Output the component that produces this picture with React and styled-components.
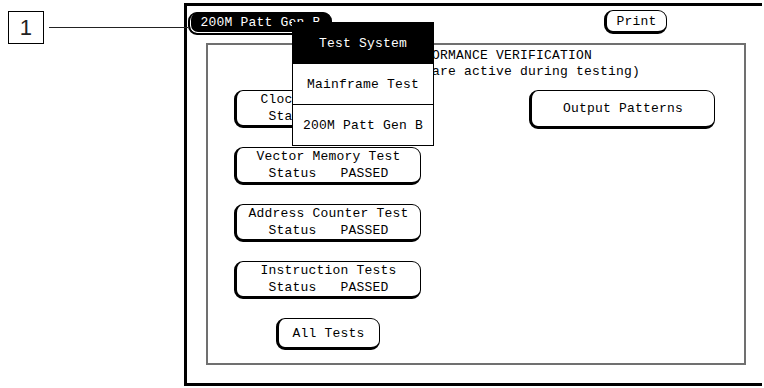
import React from "react";
import styled, { createGlobalStyle } from "styled-components";

const GlobalStyle = createGlobalStyle`
  html, body {
    margin: 0;
    padding: 0;
    background: #fff;
  }
  body {
    font-family: "Liberation Mono", "DejaVu Sans Mono", monospace;
    font-size: 13px;
    letter-spacing: 0.2px;
    color: #000;
  }
  * {
    box-sizing: border-box;
  }
`;

const Page = styled.div`
  display: flex;
  width: 764px;
  height: 388px;
  overflow: hidden;
`;

const Callout = styled.div`
  position: relative;
  z-index: 2;
  display: flex;
  align-items: center;
  align-self: flex-start;
  width: 188px;
  margin-right: -4px;
  padding: 11px 0 0 8px;
`;

const CalloutBox = styled.div`
  display: flex;
  align-items: center;
  justify-content: center;
  width: 36px;
  height: 33px;
  border: 1px solid #000;
  font-family: "Liberation Sans", Arial, sans-serif;
  font-size: 22px;
  color: #222;
`;

const CalloutLine = styled.div`
  flex: 1;
  height: 1px;
  margin-left: 5px;
  background: #222;
`;

const Frame = styled.div`
  position: relative;
  display: flex;
  flex-direction: column;
  width: 578px;
  height: 383px;
  margin-top: 3px;
  border: 3px solid #000;
  border-right: none;
`;

const TopBar = styled.div`
  display: flex;
  align-items: flex-start;
  justify-content: space-between;
  height: 37px;
  padding: 0 95px 0 1px;
`;

const Tab = styled.div`
  display: flex;
  align-items: center;
  justify-content: center;
  width: 144px;
  height: 23px;
  margin-top: 6px;
  padding-bottom: 2px;
  background: #000;
  color: #fff;
  border: 1px solid #000;
  border-left-width: 2px;
  border-bottom-width: 2px;
  border-radius: 9px;
  box-shadow: inset 1px -1px 0 #fff;
`;

const Button = styled.button`
  display: flex;
  flex-direction: column;
  align-items: center;
  justify-content: center;
  width: ${(p) => p.$w}px;
  height: ${(p) => p.$h}px;
  margin-top: ${(p) => p.$top || 0}px;
  align-self: ${(p) => p.$align || "auto"};
  padding: 0;
  background: #fff;
  color: #000;
  font: inherit;
  letter-spacing: inherit;
  line-height: 17px;
  white-space: pre;
  border: 1px solid #000;
  border-left-width: 3px;
  border-bottom-width: 3px;
  border-radius: 9px;
  cursor: pointer;
`;

const Panel = styled.div`
  display: flex;
  flex-direction: column;
  width: 540px;
  height: 322px;
  margin-left: 19px;
  border: 2px solid #707070;
`;

const Header = styled.div`
  height: 45px;
  padding: 3px 0 0 40px;
  text-align: center;
  line-height: 16px;
  white-space: pre;
`;

const Body = styled.div`
  display: flex;
  align-items: flex-start;
  gap: 108px;
  padding-left: 26px;
`;

const Column = styled.div`
  display: flex;
  flex-direction: column;
  gap: 19px;
  width: 187px;
`;

const Menu = styled.div`
  position: absolute;
  z-index: 3;
  left: 105px;
  top: 16px;
  display: flex;
  flex-direction: column;
  width: 142px;
  height: 124px;
  background: #fff;
  border: 1px solid #000;
`;

const MenuItem = styled.div`
  flex: 1;
  display: flex;
  align-items: center;
  justify-content: center;
  white-space: pre;
  background: ${(p) => (p.$active ? "#000" : "#fff")};
  color: ${(p) => (p.$active ? "#fff" : "#000")};
  & + & {
    border-top: 1px solid #000;
  }
`;

const tests = [
  "Clock Select Test",
  "Vector Memory Test",
  "Address Counter Test",
  "Instruction Tests",
];

const menuItems = ["Test System", "Mainframe Test", "200M Patt Gen B"];

export default function App() {
  return (
    <Page>
      <GlobalStyle />
      <Callout>
        <CalloutBox>1</CalloutBox>
        <CalloutLine />
      </Callout>
      <Frame>
        <TopBar>
          <Tab>200M Patt Gen B</Tab>
          <Button $w={63} $h={24} $top={4}>
            Print
          </Button>
        </TopBar>
        <Panel>
          <Header>
            <div>PERFORMANCE VERIFICATION</div>
            <div>(All pods are active during testing)</div>
          </Header>
          <Body>
            <Column>
              {tests.map((t) => (
                <Button key={t} $w={187} $h={38}>
                  <span>{t}</span>
                  <span>Status   PASSED</span>
                </Button>
              ))}
              <Button $w={104} $h={32} $align="center">
                All Tests
              </Button>
            </Column>
            <Button $w={186} $h={39}>
              Output Patterns
            </Button>
          </Body>
        </Panel>
        <Menu>
          {menuItems.map((m, i) => (
            <MenuItem key={m} $active={i === 0}>
              {m}
            </MenuItem>
          ))}
        </Menu>
      </Frame>
    </Page>
  );
}
